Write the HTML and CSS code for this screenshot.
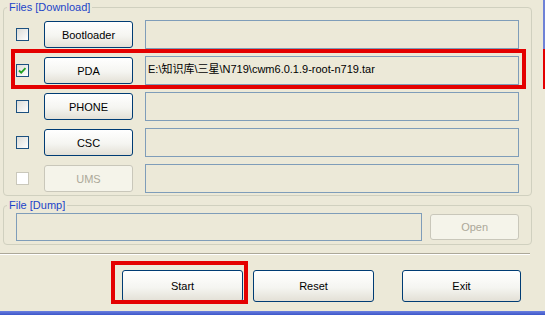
FILE: index.html
```html
<html>
    <head>
        <title>Odin</title>
        <link rel="stylesheet" href="styles.css">
    </head>
    <body>
        <div class="window">
            <fieldset class="group files">
                <legend>Files [Download]</legend>
                <div class="row">
                    <span class="check"></span>
                    <button class="btn">Bootloader</button>
                    <div class="field"></div>
                </div>
                <div class="row">
                    <span class="check checked">
                        <svg width="11" height="11" viewBox="0 0 11 11"><path d="M2 5.5 L4.2 7.7 L8.5 3.2" fill="none" stroke="#21a121" stroke-width="1.8"/></svg>
                    </span>
                    <button class="btn">PDA</button>
                    <div class="field">E:\知识库\三星\N719\cwm6.0.1.9-root-n719.tar</div>
                </div>
                <div class="row">
                    <span class="check"></span>
                    <button class="btn">PHONE</button>
                    <div class="field"></div>
                </div>
                <div class="row">
                    <span class="check"></span>
                    <button class="btn">CSC</button>
                    <div class="field"></div>
                </div>
                <div class="row">
                    <span class="check off"></span>
                    <button class="btn" disabled>UMS</button>
                    <div class="field"></div>
                </div>
            </fieldset>
            <fieldset class="group dump">
                <legend>File [Dump]</legend>
                <div class="dump-row">
                    <div class="field"></div>
                    <button class="btn" disabled>Open</button>
                </div>
            </fieldset>
            <div class="separator"></div>
            <div class="actions">
                <button class="btn big">Start</button>
                <button class="btn big">Reset</button>
                <button class="btn big exit">Exit</button>
            </div>
        </div>
        <div class="mark mark-pda"></div>
        <div class="mark mark-start"></div>
        <div class="edge edge-blue"></div>
        <div class="edge edge-red"></div>
        <div class="taskbar"></div>
    </body>
</html>
```
FILE: styles.css
```css
body{
    margin: 0;
    width: 545px;
    height: 315px;
    overflow: hidden;
    position: relative;
    background: #ece9d8;
    font-family: "Liberation Sans", "Noto Sans CJK SC", sans-serif;
    font-size: 11px;
    color: #000;
}
.window{
    padding-top: 1px;
}
.group{
    margin: 0 13px 0 3px;
    border: 1px solid #d0d0bf;
    border-radius: 4px;
    padding: 7px 12px 2px 12px;
    min-width: 0;
}
.group legend{
    color: #1c44c8;
    font-size: 11px;
    line-height: 12px;
    padding: 0 2px;
    margin-left: -9px;
}
.files .row{
    display: grid;
    grid-template-columns: 28px 101px 374px;
    height: 29px;
    align-items: center;
    margin-bottom: 7px;
}
.files .row:last-child{
    margin-bottom: 0;
}
.check{
    width: 13px;
    height: 13px;
    box-sizing: border-box;
    border: 1px solid #1c5180;
    background: linear-gradient(135deg, #dcdcd7, #ffffff);
    display: flex;
    align-items: center;
    justify-content: center;
}
.check.off{
    border-color: #cac8bb;
    background: #fff;
}
.btn{
    font-family: inherit;
    font-size: 11px;
    color: #000;
    width: 89px;
    height: 27px;
    padding: 0;
    border: 1px solid #003c74;
    border-radius: 3px;
    background: linear-gradient(#ffffff, #f5f5f1 55%, #e3e0d6);
}
.btn:disabled{
    color: #aca899;
    border-color: #c9c7ba;
    background: #f5f4ea;
}
.field{
    height: 29px;
    box-sizing: border-box;
    border: 1px solid #7f9db9;
    padding: 0 2px;
    line-height: 25px;
    white-space: nowrap;
    overflow: hidden;
}
.dump{
    margin-top: 3px;
    padding-top: 2px;
    padding-bottom: 3px;
}
.dump-row{
    display: flex;
    align-items: center;
    gap: 8px;
}
.dump-row .field{
    width: 407px;
    height: 28px;
}
.dump-row .btn{
    height: 26px;
}
.separator{
    margin-top: 8px;
    width: 530px;
    border-top: 1px solid #aca899;
    border-bottom: 1px solid #ffffff;
}
.actions{
    display: flex;
    gap: 10px;
    padding-left: 122px;
    margin-top: 15px;
}
.btn.big{
    width: 121px;
    height: 32px;
}
.btn.exit{
    margin-left: 18px;
    width: 119px;
}
.mark{
    position: absolute;
    box-sizing: border-box;
    border: 4px solid #e40000;
}
.mark-pda{
    left: 11px;
    top: 49px;
    width: 515px;
    height: 40px;
}
.mark-start{
    left: 111px;
    top: 261px;
    width: 137px;
    height: 43px;
}
.edge{
    position: absolute;
    right: 0;
    width: 2px;
}
.edge-blue{
    top: 0;
    height: 49px;
    background: #6f82d6;
}
.edge-red{
    top: 49px;
    height: 40px;
    background: #e40000;
}
.taskbar{
    position: absolute;
    left: 0;
    bottom: 0;
    width: 100%;
    height: 4px;
    background: linear-gradient(#6a7fe0, #3d56c8);
}
```
